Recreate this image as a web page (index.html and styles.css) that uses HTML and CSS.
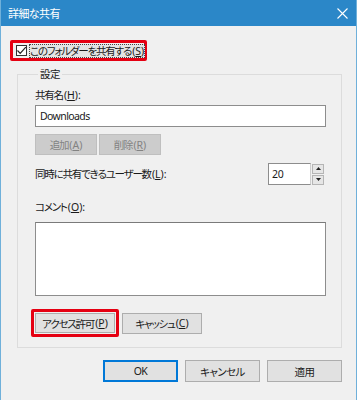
FILE: index.html
```html
<!DOCTYPE html>
<html lang="ja">
<head>
<meta charset="utf-8">
<title>詳細な共有</title>
<link rel="stylesheet" href="styles.css">
</head>
<body>
<div class="window">
  <div class="titlebar">
    <span class="title">詳細な共有</span>
    <svg class="close" width="11" height="11" viewBox="0 0 11 11"><path d="M0.5 0.5 L10.5 10.5 M10.5 0.5 L0.5 10.5" stroke="#fff" stroke-width="1.1" fill="none"/></svg>
  </div>
  <div class="content">
    <div class="share-row">
      <label class="hl check">
        <span class="box"><svg width="11" height="11" viewBox="0 0 11 11"><path d="M1.5 5.5 L4.2 8.3 L9.8 2.2" stroke="#222" stroke-width="1.2" fill="none"/></svg></span>
        <span class="check-text">このフォルダーを共有する<span class="k">(<u>S</u>)</span></span>
      </label>
    </div>
    <fieldset class="group">
      <legend>設定</legend>
      <div class="lbl">共有名<span class="k">(<u>H</u>):</span></div>
      <div class="input">Downloads</div>
      <div class="btn-row">
        <div class="btn disabled">追加<span class="k">(<u>A</u>)</span></div>
        <div class="btn disabled">削除<span class="k">(<u>R</u>)</span></div>
      </div>
      <div class="users-row">
        <div class="lbl">同時に共有できるユーザー数<span class="k">(<u>L</u>):</span></div>
        <div class="spin">
          <div class="spin-input">20</div>
          <div class="spin-btns">
            <div class="spin-btn"><svg width="5" height="3" viewBox="0 0 5 3"><path d="M0 3 L2.5 0 L5 3Z" fill="#222"/></svg></div>
            <div class="spin-btn"><svg width="5" height="3" viewBox="0 0 5 3"><path d="M0 0 L5 0 L2.5 3Z" fill="#222"/></svg></div>
          </div>
        </div>
      </div>
      <div class="lbl comment-lbl">コメント<span class="k">(<u>O</u>):</span></div>
      <div class="textarea"></div>
      <div class="btn-row2">
        <div class="hl perm"><div class="btn perm-btn">アクセス許可<span class="k">(<u>P</u>)</span></div></div>
        <div class="btn cache-btn">キャッシュ<span class="k">(<u>C</u>)</span></div>
      </div>
    </fieldset>
    <div class="footer">
      <div class="btn fbtn default">OK</div>
      <div class="btn fbtn">キャンセル</div>
      <div class="btn fbtn">適用</div>
    </div>
  </div>
</div>
</body>
</html>
```
FILE: styles.css
```css
html, body {
  margin: 0;
  padding: 0;
  background: #ffffff;
}
body {
  font-family: "Noto Sans", "Noto Sans CJK JP", sans-serif;
  font-size: 10.5px;
  letter-spacing: -1.2px;
  font-feature-settings: "palt";
  color: #1a1a1a;
}
u { text-decoration: underline; text-underline-offset: 1px; }
.k { letter-spacing: 0; margin-left: 1px; }
.window {
  width: 355px;
  height: 400px;
  background: #f0f0f0;
  border-left: 1px solid #6fb0da;
  border-right: 1px solid #6fb0da;
}
.titlebar {
  height: 26px;
  background: #2b87c8;
  display: flex;
  align-items: center;
  justify-content: space-between;
  padding: 0 8px 0 7px;
  color: #fff;
}
.title {
  font-size: 11px;
  letter-spacing: -0.6px;
}
.close { margin-top: 1px; }
.content {
  padding: 14px 14px 0 9px;
}
.share-row { display: flex; height: 21px; }
.hl {
  border: 3px solid #e50012;
  border-radius: 2px;
  box-sizing: border-box;
}
.check {
  display: flex;
  align-items: center;
  width: 137px;
  height: 21px;
  padding-left: 3px;
}
.box {
  width: 11px;
  height: 11px;
  box-sizing: border-box;
  border: 1px solid #333;
  background: #fff;
  display: flex;
  flex: none;
}
.box svg { margin: -1px; }
.check-text {
  margin-left: 2px;
  outline: 1px dotted #444;
  outline-offset: -1px;
  background: #e4e4e4;
  line-height: 14px;
  padding: 0 1px;
  white-space: nowrap;
}
.group {
  margin: 5px 0 0 7px;
  padding: 5px 15px 10px 17px;
  border: 1px solid #dcdcdc;
  min-width: 0;
}
.group legend {
  padding: 0 2px;
  margin-left: 3px;
  line-height: 16px;
  letter-spacing: -0.6px;
}
.lbl { line-height: 16px; white-space: nowrap; }
.input {
  margin-top: 2px;
  height: 22px;
  box-sizing: border-box;
  border: 1px solid #8d8d8d;
  background: #fff;
  padding: 0 4px;
  line-height: 20px;
  letter-spacing: -0.6px;
}
.btn {
  box-sizing: border-box;
  border: 1px solid #adadad;
  background: #e1e1e1;
  display: flex;
  align-items: center;
  justify-content: center;
  white-space: nowrap;
}
.btn-row {
  display: flex;
  gap: 2px;
  margin-top: 7px;
}
.btn-row .btn { width: 62px; height: 21px; }
.btn.disabled {
  background: #cccccc;
  border-color: #bfbfbf;
  color: #838383;
}
.users-row {
  display: flex;
  align-items: center;
  justify-content: space-between;
  margin-top: 8px;
}
.spin {
  display: flex;
  align-items: center;
  gap: 1px;
  margin-right: 2px;
}
.spin-input {
  width: 43px;
  height: 22px;
  box-sizing: border-box;
  border: 1px solid #8d8d8d;
  border-right: 1px solid #cfcfcf;
  background: #fff;
  padding-left: 3px;
  line-height: 20px;
  letter-spacing: -0.3px;
}
.spin-btns {
  display: flex;
  flex-direction: column;
  gap: 1px;
}
.spin-btn {
  width: 12px;
  height: 10px;
  box-sizing: border-box;
  border: 1px solid #b5b5b5;
  background: #e6e6e6;
  display: flex;
  align-items: center;
  justify-content: center;
}
.comment-lbl { margin-top: 14px; }
.textarea {
  margin-top: 7px;
  height: 74px;
  box-sizing: border-box;
  border: 1px solid #8d8d8d;
  border-top-color: #7a7a7a;
  background: #fff;
}
.btn-row2 {
  display: flex;
  align-items: center;
  gap: 3px;
  margin-top: 13px;
  margin-left: -4px;
}
.perm {
  padding: 1px;
  width: 88px;
  height: 28px;
}
.perm-btn { width: 100%; height: 100%; }
.cache-btn { width: 80px; height: 21px; }
.footer {
  display: flex;
  justify-content: flex-end;
  gap: 7px;
  margin-top: 12px;
}
.fbtn { width: 75px; height: 22px; letter-spacing: -0.6px; }
.fbtn.default { border: 1px solid #0078d7; box-shadow: inset 0 0 0 1px #0078d7; }
```
